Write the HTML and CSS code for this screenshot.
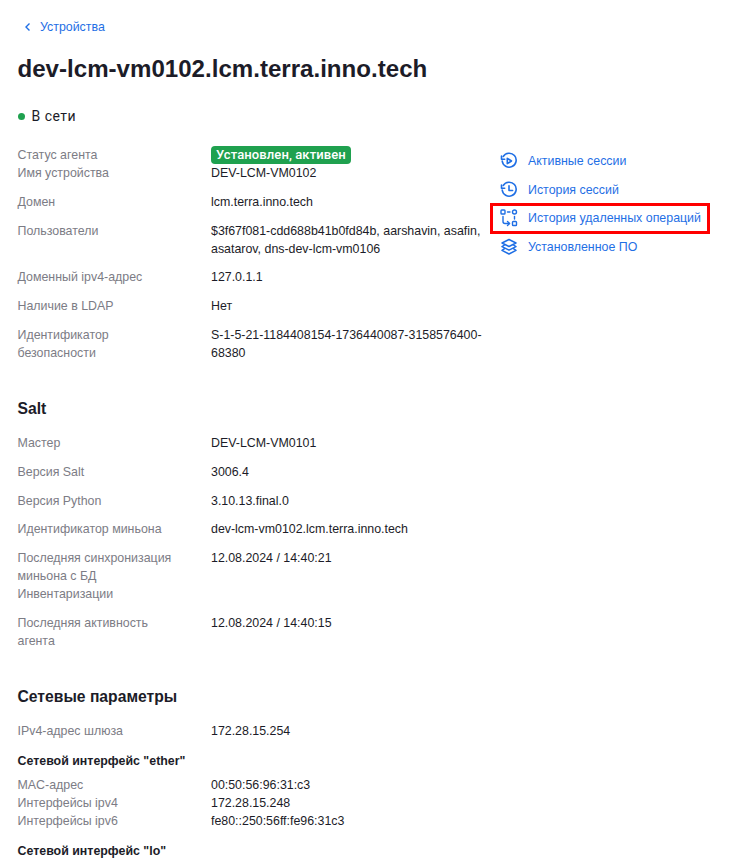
FILE: index.html
```html
<!DOCTYPE html>
<html lang="ru">
<head>
  <meta charset="UTF-8">
  <meta name="viewport" content="width=device-width, initial-scale=1.0">
  <title>dev-lcm-vm0102.lcm.terra.inno.tech</title>
  <link rel="stylesheet" href="styles.css">
</head>
<body>
  <div class="page">
    <a class="back" href="#">
      <svg width="8" height="10" viewBox="0 0 8 10" fill="none"><path d="M5.500 1.500 2 5l3.500 3.500" stroke="#1f6fe5" stroke-width="1.4"/></svg>
      <span>Устройства</span>
    </a>
    <h1>dev-lcm-vm0102.lcm.terra.inno.tech</h1>
    <div class="status"><i class="dot"></i>В сети</div>

    <div class="top">
      <div class="info">
        <div class="row tight">
          <div class="label">Статус агента</div>
          <div class="value"><span class="badge">Установлен, активен</span></div>
        </div>
        <div class="row">
          <div class="label">Имя устройства</div>
          <div class="value">DEV-LCM-VM0102</div>
        </div>
        <div class="row">
          <div class="label">Домен</div>
          <div class="value">lcm.terra.inno.tech</div>
        </div>
        <div class="row">
          <div class="label">Пользователи</div>
          <div class="value">$3f67f081-cdd688b41b0fd84b, aarshavin, asafin, asatarov, dns-dev-lcm-vm0106</div>
        </div>
        <div class="row">
          <div class="label">Доменный ipv4-адрес</div>
          <div class="value">127.0.1.1</div>
        </div>
        <div class="row">
          <div class="label">Наличие в LDAP</div>
          <div class="value">Нет</div>
        </div>
        <div class="row">
          <div class="label">Идентификатор безопасности</div>
          <div class="value">S-1-5-21-1184408154-1736440087-3158576400-68380</div>
        </div>
      </div>

      <div class="links">
        <a class="link" href="#">
          <svg width="18" height="18" viewBox="0 0 18 18" fill="none" stroke="#1f6fe5" stroke-width="1.6" stroke-linecap="round" stroke-linejoin="round"><path d="M3.200 4.500A7 7 0 1 1 2.200 9"/><path d="M1.500 4v3.200h3.200"/><path d="M7.300 6.300v5.400L11.500 9z"/></svg>
          <span>Активные сессии</span>
        </a>
        <a class="link" href="#">
          <svg width="18" height="18" viewBox="0 0 18 18" fill="none" stroke="#1f6fe5" stroke-width="1.6" stroke-linecap="round" stroke-linejoin="round"><path d="M3.200 4.500A7 7 0 1 1 2.200 9"/><path d="M1.500 4v3.200h3.200"/><path d="M9 4.800v4.700h3.600"/></svg>
          <span>История сессий</span>
        </a>
        <a class="link marked" href="#">
          <svg width="18" height="18" viewBox="0 0 18 18" fill="none" stroke="#1f6fe5" stroke-width="1.4" stroke-linecap="round" stroke-linejoin="round"><rect x="1" y="1" width="4" height="4" rx=".8"/><path d="M7.500 3h2.500"/><circle cx="14.500" cy="3" r="2"/><path d="M14.500 7.500v2.500"/><path d="M3 7.500v5a2 2 0 0 0 2 2h4.500"/><path d="M7.500 12.500l2 2-2 2"/><rect x="12.500" y="12.500" width="4" height="4" rx=".8"/></svg>
          <span>История удаленных операций</span>
        </a>
        <a class="link" href="#">
          <svg width="18" height="18" viewBox="0 0 18 18" fill="none" stroke="#1f6fe5" stroke-width="1.5" stroke-linecap="round" stroke-linejoin="round"><path d="M9 1.500 16 5 9 8.500 2 5z"/><path d="M4.500 7 2 8.700 9 12.200l7-3.500L13.500 7"/><path d="M4.500 10.700 2 12.400 9 16l7-3.600-2.500-1.700"/></svg>
          <span>Установленное ПО</span>
        </a>
      </div>
    </div>

    <h2>Salt</h2>
    <div class="info">
      <div class="row">
        <div class="label">Мастер</div>
        <div class="value">DEV-LCM-VM0101</div>
      </div>
      <div class="row">
        <div class="label">Версия Salt</div>
        <div class="value">3006.4</div>
      </div>
      <div class="row">
        <div class="label">Версия Python</div>
        <div class="value">3.10.13.final.0</div>
      </div>
      <div class="row">
        <div class="label">Идентификатор миньона</div>
        <div class="value">dev-lcm-vm0102.lcm.terra.inno.tech</div>
      </div>
      <div class="row">
        <div class="label">Последняя синхронизация миньона с БД Инвентаризации</div>
        <div class="value">12.08.2024 / 14:40:21</div>
      </div>
      <div class="row">
        <div class="label">Последняя активность агента</div>
        <div class="value">12.08.2024 / 14:40:15</div>
      </div>
    </div>

    <h2 class="net-title">Сетевые параметры</h2>
    <div class="info">
      <div class="row">
        <div class="label">IPv4-адрес шлюза</div>
        <div class="value">172.28.15.254</div>
      </div>
    </div>

    <h3>Сетевой интерфейс "ether"</h3>
    <div class="info">
      <div class="row tight">
        <div class="label">MAC-адрес</div>
        <div class="value">00:50:56:96:31:c3</div>
      </div>
      <div class="row tight">
        <div class="label">Интерфейсы ipv4</div>
        <div class="value">172.28.15.248</div>
      </div>
      <div class="row tight">
        <div class="label">Интерфейсы ipv6</div>
        <div class="value">fe80::250:56ff:fe96:31c3</div>
      </div>
    </div>

    <h3>Сетевой интерфейс "lo"</h3>
  </div>
</body>
</html>
```

FILE: styles.css
```css
* {
  box-sizing: border-box;
  margin: 0;
  padding: 0;
}

html, body {
  height: 860px;
  overflow: hidden;
}

body {
  font-family: "Liberation Sans", Arial, sans-serif;
  font-size: 12.4px;
  line-height: 18px;
  color: #1c1c28;
  background: #fff;
}

.page {
  padding: 18px 20px 0 17.5px;
}

a {
  color: #1f6fe5;
  text-decoration: none;
}

.back {
  display: flex;
  align-items: center;
  gap: 8px;
  padding-left: 6.5px;
}

h1 {
  font-size: 24.1px;
  line-height: 32px;
  font-weight: 700;
  margin-top: 17px;
}

.status {
  display: flex;
  align-items: center;
  gap: 7px;
  margin-top: 22px;
  font-family: Roboto, Arial, sans-serif;
  font-size: 14px;
  letter-spacing: .5px;
}

.dot {
  width: 7px;
  height: 7px;
  border-radius: 50%;
  background: #1fa14f;
}

.top {
  display: flex;
  margin-top: 21px;
}

.info {
  width: 467.5px;
}

.row {
  display: grid;
  grid-template-columns: 193.5px 1fr;
  margin-bottom: 10.84px;
}

.row.tight {
  margin-bottom: 0;
}

.label {
  color: #7c7c85;
  padding-right: 30px;
}

.badge {
  display: inline-block;
  height: 18px;
  padding: 0 5px;
  border-radius: 4px;
  background: #1fa14f;
  color: #fff;
  font-family: Roboto, Arial, sans-serif;
  font-size: 13px;
  font-weight: 500;
  letter-spacing: .1px;
  vertical-align: top;
}

.links {
  display: flex;
  flex-direction: column;
  margin: 1px 0 0 6px;
}

.link {
  display: flex;
  align-items: center;
  gap: 10px;
  width: 218px;
  height: 28.6px;
  padding-left: 9px;
  white-space: nowrap;
}

.link svg {
  flex: none;
}

.marked {
  outline: 3px solid #f00;
  outline-offset: -2px;
}

h2 {
  font-size: 15.7px;
  line-height: 22px;
  font-weight: 700;
  margin-top: 25px;
  margin-bottom: 14px;
}

.net-title {
  margin-top: 36px;
}

h3 {
  font-size: 12.4px;
  line-height: 18px;
  font-weight: 700;
  margin-top: 12px;
  margin-bottom: 6px;
}
```
